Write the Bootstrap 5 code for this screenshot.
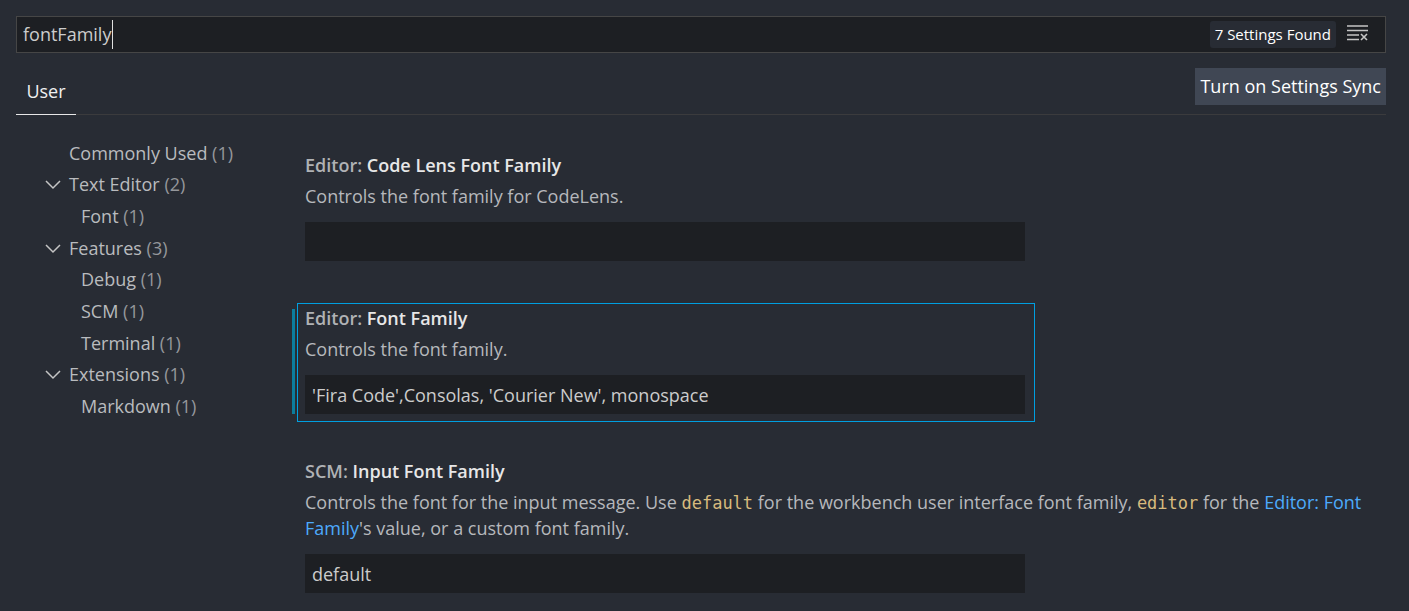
<!DOCTYPE html>
<html lang="en">
<head>
<meta charset="utf-8">
<meta name="viewport" content="width=device-width, initial-scale=1">
<title>Settings</title>
<link href="https://cdn.jsdelivr.net/npm/bootstrap@5.3.0/dist/css/bootstrap.min.css" rel="stylesheet">
<style>
  body { background: #282c34; color: #b6b8bc; font: 18px/26px "Open Sans", "Noto Sans", sans-serif; }
  .settings-page { padding: 16px 23px 16px 16px; }
  .search-box { background: #1d1f23; border: 1px solid #464646; height: 37px; padding-right: 16px; }
  .search-box input { background: transparent; color: #ccc; padding: 0 6px 2px; height: 35px; min-width: 0; outline: 0; }
  .search-caret { left: 95px; top: 3px; width: 1px; height: 29px; background: #e0e0e0; }
  .found-count { background: #282c34; color: #fff; font-size: 15px; line-height: 27px; padding: 0 5px; border-radius: 3px; margin-right: 11px; }
  .tab-strip { border-bottom: 1px solid #3b3b3d; height: 62px; }
  .user-tab { color: #f0f0f0; width: 60px; height: 47px; border: 0; border-bottom: 1px solid #e7e7e7; background: transparent; padding: 0; margin-bottom: -1px; }
  .sync-btn { background: #404754; color: #fff; height: 37px; padding: 0 5px; border: 0; border-radius: 0; font-size: 18px; line-height: 37px; margin-top: 15px; }
  .toc { width: 276px; padding-top: 22px; }
  .toc ul { display: grid; grid-auto-rows: 1fr; height: 285px; padding-left: 29px; }
  .toc li { display: flex; align-items: center; }
  .toc a { color: #b9bbbe; text-decoration: none; white-space: pre; }
  .toc .top-item a { padding-left: 8px; }
  .toc .sub-item { padding-left: 36px; }
  .toc .no-arrow { padding-left: 16px; }
  .toc small { color: #95979b; font-size: 18px; }
  .setting-list { padding: 35px 0 0 5px; display: grid; gap: 34px; }
  .setting { border: 1px solid transparent; padding: 0 9px 7px 7px; position: relative; }
  .setting-short { width: 738px; max-width: 100%; }
  .setting.is-selected { border-color: #009fe0; }
  .setting.is-selected::before { content: ""; position: absolute; left: -6px; top: 5px; bottom: 7px; width: 3px; background: #0c7d9d; }
  .setting h2 { font-size: 18px; line-height: 28px; font-weight: 600; margin: 0 0 4px; color: #e7e7e7; }
  .setting h2 span { color: #b0b2b5; }
  .setting p { margin: 0 0 13px; }
  .setting code { font: 17px/24px "DejaVu Sans Mono", monospace; color: #d7ba7d; }
  .setting a { color: #4daafc; text-decoration: none; }
  .setting input { background: #1d1f23; color: #ccc; border: 0; border-radius: 0; height: 39px; width: 720px; max-width: 100%; padding: 0 7px; display: block; }
</style>
</head>
<body>
<div class="settings-page">
  <div class="search-box d-flex align-items-center position-relative">
    <input class="flex-grow-1 border-0" type="text" aria-label="Search settings" value="fontFamily" spellcheck="false">
    <span class="search-caret position-absolute"></span>
    <span class="found-count">7 Settings Found</span>
    <button class="btn p-0 border-0 d-flex mb-1" type="button" aria-label="Clear search">
      <svg width="22" height="18" viewBox="0 0 22 18" fill="none" stroke="#c5c5c5" stroke-width="1.6"><path d="M0 2h21M0 6.500h21M0 11h12M0 15.500h12"/><path d="M14 10l6 6M20 10l-6 6"/></svg>
    </button>
  </div>
  <div class="tab-strip d-flex justify-content-between">
    <button class="user-tab align-self-end" type="button">User</button>
    <button class="btn sync-btn" type="button">Turn on Settings Sync</button>
  </div>
  <div class="d-flex">
    <nav class="toc flex-shrink-0" aria-label="Settings groups">
      <ul class="list-unstyled mb-0">
        <li class="top-item no-arrow"><a href="#">Commonly Used <small>(1)</small></a></li>
        <li class="top-item"><svg width="16" height="16" viewBox="0 0 16 16" fill="none" stroke="#c5c5c5" stroke-width="1.5"><path d="M1 5l7 7 7-7"/></svg><a href="#">Text Editor <small>(2)</small></a></li>
        <li class="sub-item"><a href="#">Font <small>(1)</small></a></li>
        <li class="top-item"><svg width="16" height="16" viewBox="0 0 16 16" fill="none" stroke="#c5c5c5" stroke-width="1.5"><path d="M1 5l7 7 7-7"/></svg><a href="#">Features <small>(3)</small></a></li>
        <li class="sub-item"><a href="#">Debug <small>(1)</small></a></li>
        <li class="sub-item"><a href="#">SCM <small>(1)</small></a></li>
        <li class="sub-item"><a href="#">Terminal <small>(1)</small></a></li>
        <li class="top-item"><svg width="16" height="16" viewBox="0 0 16 16" fill="none" stroke="#c5c5c5" stroke-width="1.5"><path d="M1 5l7 7 7-7"/></svg><a href="#">Extensions <small>(1)</small></a></li>
        <li class="sub-item"><a href="#">Markdown <small>(1)</small></a></li>
      </ul>
    </nav>
    <main class="setting-list flex-grow-1">
      <section class="setting setting-short">
        <h2 id="lens"><span>Editor:</span> Code Lens Font Family</h2>
        <p>Controls the font family for CodeLens.</p>
        <input type="text" aria-labelledby="lens">
      </section>
      <section class="setting setting-short is-selected">
        <h2 id="family"><span>Editor:</span> Font Family</h2>
        <p>Controls the font family.</p>
        <input type="text" aria-labelledby="family" value="'Fira Code',Consolas, 'Courier New', monospace">
      </section>
      <section class="setting">
        <h2 id="scm"><span>SCM:</span> Input Font Family</h2>
        <p>Controls the font for the input message. Use <code>default</code> for the workbench user interface font family, <code>editor</code> for the <a href="#family">Editor: Font Family</a>'s value, or a custom font family.</p>
        <input type="text" aria-labelledby="scm" value="default">
      </section>
    </main>
  </div>
</div>
<script src="https://cdn.jsdelivr.net/npm/bootstrap@5.3.0/dist/js/bootstrap.bundle.min.js"></script>
</body>
</html>
